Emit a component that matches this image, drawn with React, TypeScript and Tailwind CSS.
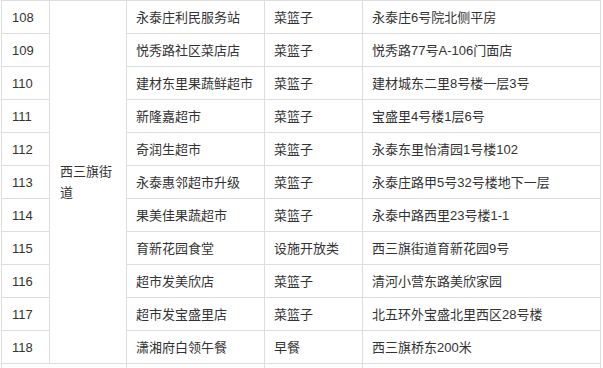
const rows: [string, string, string, string][] = [
  ['108', '永泰庄利民服务站', '菜篮子', '永泰庄6号院北侧平房'],
  ['109', '悦秀路社区菜店店', '菜篮子', '悦秀路77号A-106门面店'],
  ['110', '建材东里果蔬鲜超市', '菜篮子', '建材城东二里8号楼一层3号'],
  ['111', '新隆嘉超市', '菜篮子', '宝盛里4号楼1层6号'],
  ['112', '奇润生超市', '菜篮子', '永泰东里怡清园1号楼102'],
  ['113', '永泰惠邻超市升级', '菜篮子', '永泰庄路甲5号32号楼地下一层'],
  ['114', '果美佳果蔬超市', '菜篮子', '永泰中路西里23号楼1-1'],
  ['115', '育新花园食堂', '设施开放类', '西三旗街道育新花园9号'],
  ['116', '超市发美欣店', '菜篮子', '清河小营东路美欣家园'],
  ['117', '超市发宝盛里店', '菜篮子', '北五环外宝盛北里西区28号楼'],
  ['118', '潇湘府白领午餐', '早餐', '西三旗桥东200米'],
];

const cell = 'border border-[#dddddd] pl-[9px] pr-[6px] align-middle';

export default function App() {
  return (
    <div
      className="w-[603px] h-[368px] overflow-hidden bg-white text-[13px] text-[#333333]"
      style={{ fontFamily: '"Liberation Sans", "Noto Sans CJK SC", sans-serif' }}
    >
      <table className="ml-[1px] w-[600px] table-fixed border-collapse leading-[21px]">
        <colgroup>
          <col className="w-[48px]" />
          <col className="w-[77px]" />
          <col className="w-[138px]" />
          <col className="w-[98px]" />
          <col />
        </colgroup>
        <tbody>
          {rows.map(([no, name, kind, addr], i) => (
            <tr key={no} className="h-[33px]">
              <td className={cell + ' pl-[10px]'}>{no}</td>
              {i === 0 && (
                <td rowSpan={rows.length} className={cell + ' pl-[10px]'}>
                  西三旗街道
                </td>
              )}
              <td className={cell}>{name}</td>
              <td className={cell}>{kind}</td>
              <td className={cell}>{addr}</td>
            </tr>
          ))}
          <tr className="h-[33px]">
            <td colSpan={2} className={cell} />
            <td className={cell} />
            <td className={cell} />
            <td className={cell} />
          </tr>
        </tbody>
      </table>
    </div>
  );
}
